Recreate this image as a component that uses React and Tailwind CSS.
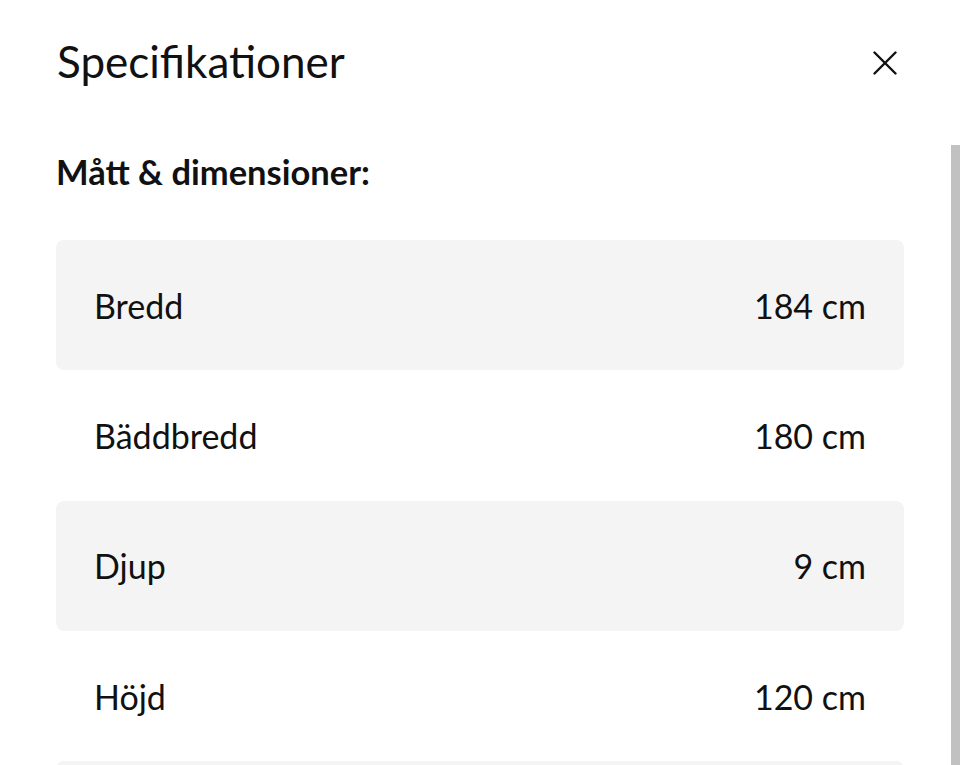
export default function App() {
  const specs = [
    { label: 'Bredd', value: '184 cm' },
    { label: 'Bäddbredd', value: '180 cm' },
    { label: 'Djup', value: '9 cm' },
    { label: 'Höjd', value: '120 cm' },
  ];

  return (
    <div className="w-[960px] h-[765px] overflow-hidden bg-white text-[#111] font-['Lato',sans-serif] flex flex-col">
      {/* Header */}
      <div className="h-[145px] shrink-0 flex items-start justify-between pl-[57px] pr-[63px] pt-[36px]">
        <h2 className="text-[44px] leading-[50px] font-normal">Specifikationer</h2>
        <button className="mt-[15px] w-[24px] h-[24px] flex items-center justify-center">
          <svg width="24" height="24" viewBox="0 0 24 24" fill="none" stroke="#111" strokeWidth="2.4" strokeLinecap="round">
            <line x1="1.5" y1="1.5" x2="22.5" y2="22.5" />
            <line x1="22.5" y1="1.5" x2="1.5" y2="22.5" />
          </svg>
        </button>
      </div>

      {/* Scroll area */}
      <div className="flex-1 flex min-h-0">
        <div className="flex-1 pl-[56px] pr-[47px] pt-[9px] overflow-hidden">
          <h3 className="text-[34.5px] leading-[36px] font-bold mb-[50px]">Mått &amp; dimensioner:</h3>
          <div className="flex flex-col">
            {specs.map((s, i) => (
              <div
                key={i}
                className={`h-[130.3px] shrink-0 flex items-center justify-between px-[38px] rounded-[8px] text-[34px] ${i % 2 === 0 ? 'bg-[#f4f4f4]' : 'bg-white'}`}
              >
                <span>{s.label}</span>
                <span>{s.value}</span>
              </div>
            ))}
            <div className="h-[130px] shrink-0 rounded-[8px] bg-[#f4f4f4]" />
          </div>
        </div>
        <div className="w-[9px] shrink-0 bg-[#c1c1c1]" />
      </div>
    </div>
  );
}
